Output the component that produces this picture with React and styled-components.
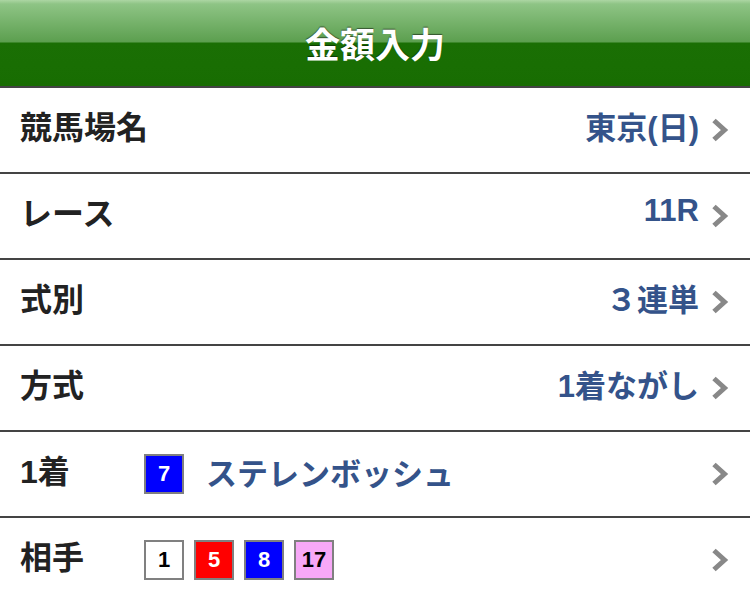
import React from 'react'
import styled, { createGlobalStyle } from 'styled-components'

const GlobalStyle = createGlobalStyle`
  html, body {
    margin: 0;
    padding: 0;
    background: #fff;
    font-family: "Liberation Sans", "Noto Sans CJK JP", sans-serif;
  }
`

const rows = [
  { label: '競馬場名', value: '東京(日)' },
  { label: 'レース', value: '11R' },
  { label: '式別', value: '３連単' },
  { label: '方式', value: '1着ながし' },
]

const badgeColors = {
  white: { bg: '#fff', fg: '#000' },
  red: { bg: '#ff0000', fg: '#fff' },
  blue: { bg: '#0000ff', fg: '#fff' },
  pink: { bg: '#f7a8f7', fg: '#000' },
}

const Chevron = () => (
  <ChevronSvg viewBox="0 0 18 26">
    <path d="M3 3.5 L13.5 13 L3 22.5" fill="none" stroke="#888" strokeWidth="5" />
  </ChevronSvg>
)

const App = () => {
  return (
    <>
      <GlobalStyle />
      <Page>
        <Header>
          <Title>金額入力</Title>
        </Header>
        {rows.map((r) => (
          <Row key={r.label}>
            <Label>{r.label}</Label>
            <Value>{r.value}</Value>
            <Chevron />
          </Row>
        ))}
        <Row>
          <Label>1着</Label>
          <Badges>
            <Badge color="blue">7</Badge>
            <HorseName>ステレンボッシュ</HorseName>
          </Badges>
          <Chevron />
        </Row>
        <Row>
          <Label>相手</Label>
          <Badges>
            <Badge color="white">1</Badge>
            <Badge color="red">5</Badge>
            <Badge color="blue">8</Badge>
            <Badge color="pink">17</Badge>
          </Badges>
          <Chevron />
        </Row>
      </Page>
    </>
  )
}

export default App

const Page = styled.div`
  width: 750px;
  height: 599px;
  overflow: hidden;
`

const Header = styled.header`
  height: 86px;
  border-bottom: 2px solid #444;
  background: linear-gradient(
    to bottom,
    #acd6a3 0px,
    #8ec485 4px,
    #5c9f4f 42px,
    #1a6f04 43px,
    #186d02 86px
  );
  display: flex;
  align-items: center;
  justify-content: center;
`

const Title = styled.h1`
  margin: 0 0 2px 0;
  color: #fff;
  font-size: 35px;
  font-weight: 700;
  font-family: "Noto Sans CJK JP", sans-serif;
  text-shadow: 0 -1px 1px rgba(0, 0, 0, 0.5);
`

const Row = styled.div`
  height: 84px;
  border-bottom: 2px solid #444;
  display: flex;
  align-items: center;
  padding: 0 21px 0 20px;
`

const Label = styled.div`
  width: 124px;
  padding-bottom: 10px;
  color: #222;
  font-size: 32px;
  font-weight: 700;
  font-family: "Liberation Sans", "Noto Sans CJK JP", sans-serif;
  white-space: nowrap;
`

const Value = styled.div`
  flex: 1;
  padding-bottom: 10px;
  text-align: right;
  color: #34538a;
  font-size: 31px;
  font-weight: 700;
  font-family: "Liberation Sans", "Noto Sans CJK JP", sans-serif;
  white-space: nowrap;
`

const Badges = styled.div`
  flex: 1;
  display: flex;
  align-items: center;
  gap: 10px;
`

const Badge = styled.span`
  width: 36px;
  height: 36px;
  border: 2px solid #808080;
  background: ${({ color }) => badgeColors[color].bg};
  color: ${({ color }) => badgeColors[color].fg};
  display: flex;
  align-items: center;
  justify-content: center;
  font-size: 22px;
  font-weight: 700;
  font-family: "Liberation Sans", sans-serif;
`

const HorseName = styled.span`
  margin-left: 12px;
  padding-bottom: 6px;
  color: #34538a;
  font-size: 31px;
  font-weight: 700;
  font-family: "Noto Sans CJK JP", sans-serif;
`

const ChevronSvg = styled.svg`
  width: 18px;
  height: 26px;
  margin-left: 12px;
  flex-shrink: 0;
`
